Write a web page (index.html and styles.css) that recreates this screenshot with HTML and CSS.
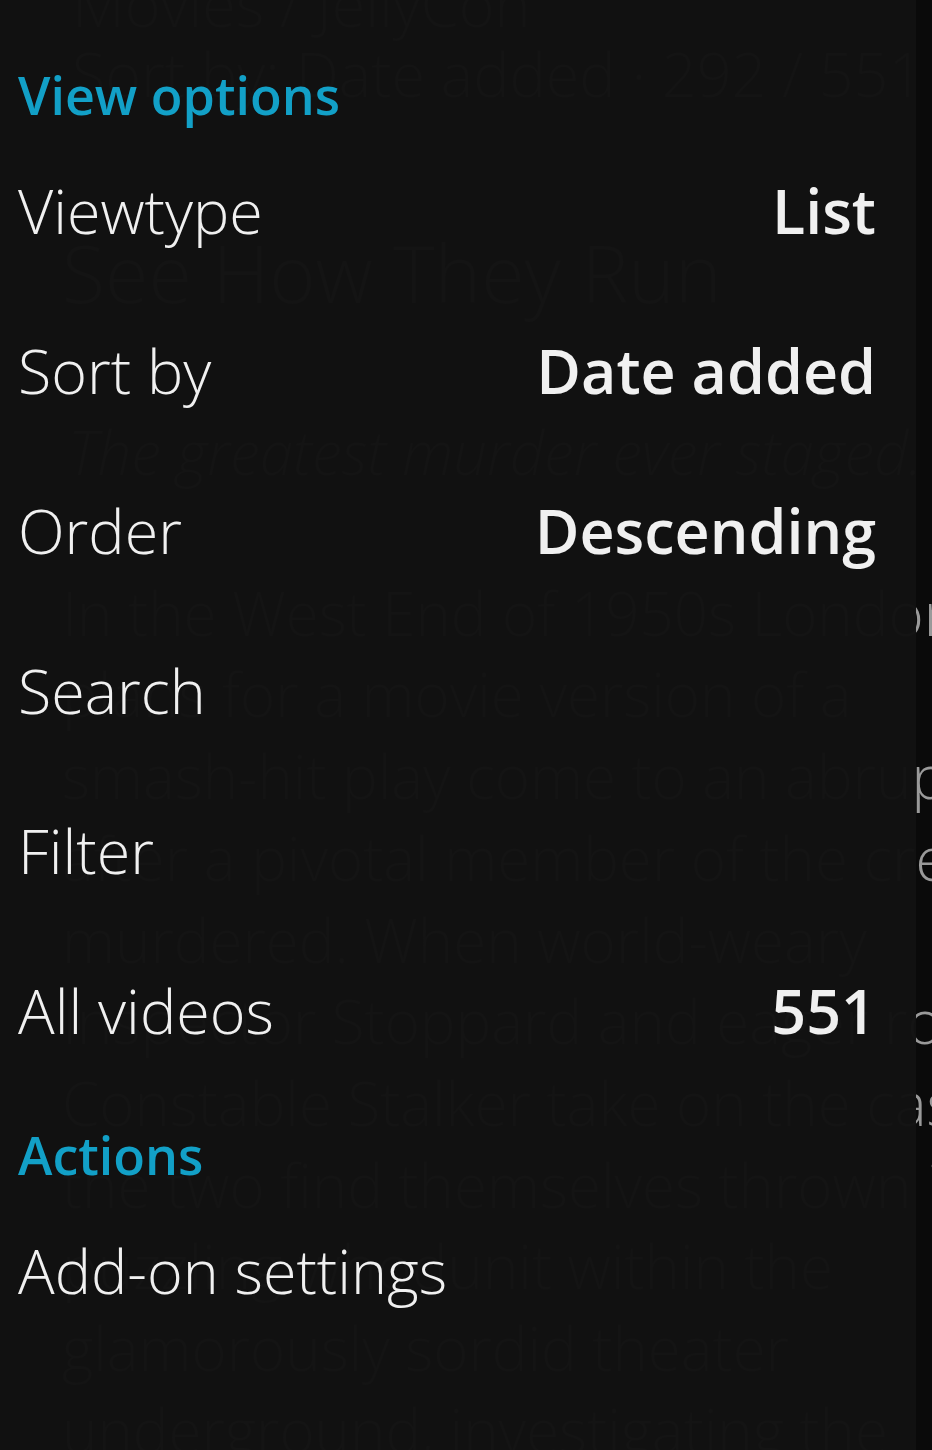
FILE: index.html
```html
<!DOCTYPE html>
<html lang="en">
<head>
<meta charset="utf-8">
<title>View options</title>
<link rel="stylesheet" href="styles.css">
</head>
<body>
<div class="screen">
  <div class="backdrop">
    <div class="crumbs">
      <div class="crumb-line">Movies / JellyCon</div>
      <div class="crumb-line">Sort by: Date added · 292 / 551</div>
    </div>
    <div class="title">See How They Run</div>
    <div class="tagline">The greatest murder ever staged.</div>
    <div class="plot">
      <div class="plot-line">In the West End of 1950s London,</div>
      <div class="plot-line">plans for a movie version of a</div>
      <div class="plot-line">smash-hit play come to an abrupt halt</div>
      <div class="plot-line">after a pivotal member of the crew is</div>
      <div class="plot-line">murdered. When world-weary</div>
      <div class="plot-line">Inspector Stoppard and eager rookie</div>
      <div class="plot-line">Constable Stalker take on the case,</div>
      <div class="plot-line">the two find themselves thrown into a</div>
      <div class="plot-line">puzzling whodunit within the</div>
      <div class="plot-line">glamorously sordid theater</div>
      <div class="plot-line">underground, investigating the</div>
    </div>
  </div>

  <div class="panel">
    <div class="group-title first">View options</div>
    <div class="row"><span class="label">Viewtype</span><span class="value">List</span></div>
    <div class="row"><span class="label">Sort by</span><span class="value">Date added</span></div>
    <div class="row"><span class="label">Order</span><span class="value">Descending</span></div>
    <div class="row"><span class="label">Search</span></div>
    <div class="row"><span class="label">Filter</span></div>
    <div class="row"><span class="label">All videos</span><span class="value">551</span></div>
    <div class="group-title">Actions</div>
    <div class="row"><span class="label">Add-on settings</span></div>
  </div>
</div>
</body>
</html>
```

FILE: styles.css
```css
html, body {
  margin: 0;
  padding: 0;
  background: #0a0a0a;
}

.screen {
  position: relative;
  width: 932px;
  height: 1450px;
  overflow: hidden;
  font-family: "Open Sans", "Noto Sans", "Liberation Sans", sans-serif;
}

/* background library view showing through */
.backdrop {
  padding-left: 62px;
  color: #9a9a9a;
  font-weight: 300;
  white-space: nowrap;
}

.crumbs {
  margin-top: -31px;
  padding-left: 10px;
  font-size: 61px;
  line-height: 70px;
}

.title {
  margin-top: 110px;
  font-size: 79px;
  line-height: 107px;
}

.tagline {
  margin-top: 86px;
  padding-left: 6px;
  font-size: 60px;
  line-height: 81.7px;
  font-style: italic;
}

.plot {
  margin-top: 79px;
  font-size: 60px;
  line-height: 81.7px;
}

/* side menu overlay */
.panel {
  position: absolute;
  top: 0;
  left: 0;
  width: 916px;
  height: 1450px;
  box-sizing: border-box;
  padding: 0 40px 0 18px;
  background: rgba(17, 17, 17, 0.986);
  display: flex;
  flex-direction: column;
}

.group-title {
  margin-top: 29px;
  font-size: 52px;
  line-height: 71px;
  font-weight: 600;
  color: #12a0c7;
}

.group-title.first {
  margin-top: 59px;
}

.row {
  height: 160px;
  display: flex;
  align-items: center;
  justify-content: space-between;
  color: #f0f0f0;
}

.label {
  font-size: 61px;
  font-weight: 300;
}

.value {
  font-size: 61px;
  font-weight: 600;
}
```
